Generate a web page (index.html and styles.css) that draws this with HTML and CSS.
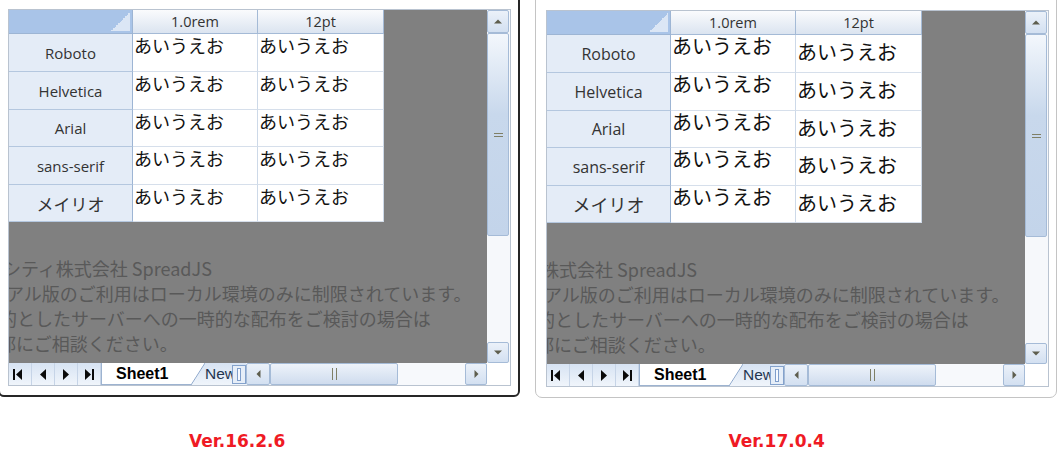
FILE: index.html
```html
<!DOCTYPE html>
<html lang="ja">
<head>
<meta charset="utf-8">
<title>SpreadJS font comparison</title>
<link rel="stylesheet" href="styles.css">
</head>
<body>
<div class="page">
  <div class="panels">
    <div class="panel panel-a">
      <div class="sheet">
        <div class="viewport">
          <div class="grid">
            <div class="corner"></div>
            <div class="colhdr">1.0rem</div>
            <div class="colhdr">12pt</div>
            <div class="rowhdr">Roboto</div><div class="cell c1">あいうえお</div><div class="cell c2">あいうえお</div>
            <div class="rowhdr">Helvetica</div><div class="cell c1">あいうえお</div><div class="cell c2">あいうえお</div>
            <div class="rowhdr">Arial</div><div class="cell c1">あいうえお</div><div class="cell c2">あいうえお</div>
            <div class="rowhdr">sans-serif</div><div class="cell c1">あいうえお</div><div class="cell c2">あいうえお</div>
            <div class="rowhdr rowhdr-jp">メイリオ</div><div class="cell c1">あいうえお</div><div class="cell c2">あいうえお</div>
          </div>
          <div class="watermark">
            <div class="wm wm1">グレープシティ株式会社 SpreadJS</div>
            <div class="wm wm2">トライアル版のご利用はローカル環境のみに制限されています。</div>
            <div class="wm wm3">評価を目的としたサーバーへの一時的な配布をご検討の場合は</div>
            <div class="wm wm4">営業部にご相談ください。</div>
          </div>
        </div>
        <div class="vscroll">
          <div class="sbtn vbtn-up"><svg width="8" height="5" viewBox="0 0 8 5"><path d="M0 4.5L4 .5L8 4.5Z"/></svg></div>
          <div class="vthumb"><span class="vgrip"></span></div>
          <div class="vtrack"></div>
          <div class="sbtn vbtn-down"><svg width="8" height="5" viewBox="0 0 8 5"><path d="M0 .5L4 4.5L8 .5Z"/></svg></div>
        </div>
        <div class="tabbar">
          <div class="nav">
            <div class="navbtn nb1"><svg width="9" height="11" viewBox="0 0 9 11"><rect x="0" y="0" width="2" height="11"/><path d="M9 0L3 5.5L9 11Z"/></svg></div>
            <div class="navbtn"><svg width="6" height="11" viewBox="0 0 6 11"><path d="M6 0L0 5.5L6 11Z"/></svg></div>
            <div class="navbtn"><svg width="6" height="11" viewBox="0 0 6 11"><path d="M0 0L6 5.5L0 11Z"/></svg></div>
            <div class="navbtn"><svg width="9" height="11" viewBox="0 0 9 11"><path d="M0 0L6 5.5L0 11Z"/><rect x="7" y="0" width="2" height="11"/></svg></div>
          </div>
          <div class="tab-active">Sheet1</div>
          <div class="tab-new">New</div>
          <div class="splitter"><span></span></div>
          <div class="hscroll">
            <div class="sbtn hbtn-l"><svg width="5" height="8" viewBox="0 0 5 8"><path d="M4.5 0L.5 4L4.5 8Z"/></svg></div>
            <div class="hthumb"><span class="hgrip"></span></div>
            <div class="htrack"></div>
            <div class="sbtn hbtn-r"><svg width="5" height="8" viewBox="0 0 5 8"><path d="M.5 0L4.5 4L.5 8Z"/></svg></div>
          </div>
        </div>
        <div class="sheet-corner"></div>
      </div>
    </div>

    <div class="panel panel-b">
      <div class="sheet sheet-17">
        <div class="viewport">
          <div class="grid">
            <div class="corner"></div>
            <div class="colhdr">1.0rem</div>
            <div class="colhdr">12pt</div>
            <div class="rowhdr">Roboto</div><div class="cell c1">あいうえお</div><div class="cell c2">あいうえお</div>
            <div class="rowhdr">Helvetica</div><div class="cell c1">あいうえお</div><div class="cell c2">あいうえお</div>
            <div class="rowhdr">Arial</div><div class="cell c1">あいうえお</div><div class="cell c2">あいうえお</div>
            <div class="rowhdr">sans-serif</div><div class="cell c1">あいうえお</div><div class="cell c2">あいうえお</div>
            <div class="rowhdr rowhdr-jp">メイリオ</div><div class="cell c1">あいうえお</div><div class="cell c2">あいうえお</div>
          </div>
          <div class="watermark">
            <div class="wm wm1b">メシウス株式会社 SpreadJS</div>
            <div class="wm wm2">トライアル版のご利用はローカル環境のみに制限されています。</div>
            <div class="wm wm3">評価を目的としたサーバーへの一時的な配布をご検討の場合は</div>
            <div class="wm wm4">営業部にご相談ください。</div>
          </div>
        </div>
        <div class="vscroll">
          <div class="sbtn vbtn-up"><svg width="8" height="5" viewBox="0 0 8 5"><path d="M0 4.5L4 .5L8 4.5Z"/></svg></div>
          <div class="vthumb"><span class="vgrip"></span></div>
          <div class="vtrack"></div>
          <div class="sbtn vbtn-down"><svg width="8" height="5" viewBox="0 0 8 5"><path d="M0 .5L4 4.5L8 .5Z"/></svg></div>
        </div>
        <div class="tabbar">
          <div class="nav">
            <div class="navbtn nb1"><svg width="9" height="11" viewBox="0 0 9 11"><rect x="0" y="0" width="2" height="11"/><path d="M9 0L3 5.5L9 11Z"/></svg></div>
            <div class="navbtn"><svg width="6" height="11" viewBox="0 0 6 11"><path d="M6 0L0 5.5L6 11Z"/></svg></div>
            <div class="navbtn"><svg width="6" height="11" viewBox="0 0 6 11"><path d="M0 0L6 5.5L0 11Z"/></svg></div>
            <div class="navbtn"><svg width="9" height="11" viewBox="0 0 9 11"><path d="M0 0L6 5.5L0 11Z"/><rect x="7" y="0" width="2" height="11"/></svg></div>
          </div>
          <div class="tab-active">Sheet1</div>
          <div class="tab-new">New</div>
          <div class="splitter"><span></span></div>
          <div class="hscroll">
            <div class="sbtn hbtn-l"><svg width="5" height="8" viewBox="0 0 5 8"><path d="M4.5 0L.5 4L4.5 8Z"/></svg></div>
            <div class="hthumb"><span class="hgrip"></span></div>
            <div class="htrack"></div>
            <div class="sbtn hbtn-r"><svg width="5" height="8" viewBox="0 0 5 8"><path d="M.5 0L4.5 4L.5 8Z"/></svg></div>
          </div>
        </div>
        <div class="sheet-corner"></div>
      </div>
    </div>
  </div>

  <div class="labels">
    <div class="ver ver-a">Ver.16.2.6</div>
    <div class="ver ver-b">Ver.17.0.4</div>
  </div>
</div>
</body>
</html>
```
FILE: styles.css
```css
* { box-sizing: border-box; }

body {
  margin: 0;
  background: #fff;
  font-family: "Open Sans", "Noto Sans CJK JP", sans-serif;
}

.page {
  width: 1059px;
  height: 466px;
  overflow: hidden;
}

.panels {
  display: flex;
  align-items: flex-start;
}

.panel { background: #fff; }

.panel-a {
  margin: -2px 0 0 -2px;
  width: 522px;
  height: 399px;
  border: 2px solid #262626;
  border-radius: 0 0 6px 6px;
  padding: 9px 0 0 8px;
}

.panel-b {
  margin: -1px 0 0 15px;
  width: 522px;
  height: 399px;
  border: 1px solid #c4c4c4;
  border-radius: 0 0 7px 7px;
  padding: 10px 0 0 10px;
}

/* ---------- spreadsheet ---------- */
.sheet {
  width: 503px;
  height: 377px;
  border: 1px solid #b9c3d0;
  display: grid;
  grid-template-columns: 478px 23px;
  grid-template-rows: 353px 22px;
  background: #fff;
}

.viewport {
  background: #808080;
  position: relative;
  overflow: hidden;
}

.grid {
  display: grid;
  grid-template-columns: 124px 125px 126px;
  grid-template-rows: 24px 38px 38px 37px 38px 37px;
  width: 375px;
}

.corner {
  background:
    linear-gradient(135deg, transparent 50%, #dbe6f5 50%) right 2px bottom 2px / 19px 19px no-repeat,
    #a9c4e8;
  border-right: 1px solid #9db5d4;
  border-bottom: 1px solid #9db5d4;
}

.colhdr {
  background: linear-gradient(#fafbfd, #dbe4f0);
  border-right: 1px solid #a4bad6;
  border-bottom: 1px solid #a4bad6;
  display: flex;
  align-items: center;
  justify-content: center;
  font-size: 14.5px;
  color: #333;
}

.rowhdr {
  background: #e4ecf7;
  border-right: 1px solid #9db5d4;
  border-bottom: 1px solid #b4c7df;
  display: flex;
  align-items: center;
  justify-content: center;
  font-size: 15px;
  color: #333;
}

.rowhdr-jp {
  font-family: "Noto Sans CJK JP", sans-serif;
  font-size: 17px;
}

.cell {
  background: #fff;
  border-right: 1px solid #cdd9e8;
  border-bottom: 1px solid #d6dfeb;
  font-family: "Noto Sans CJK JP", sans-serif;
  font-size: 18px;
  line-height: 22px;
  padding: 0 0 0 1px;
  color: #111;
  white-space: nowrap;
}

.sheet-17 .rowhdr { font-size: 16px; }
.sheet-17 .rowhdr-jp { font-size: 18px; }
.sheet-17 .cell { font-size: 20px; line-height: 22px; }
.sheet-17 .c1 { padding-top: 0; }
.sheet-17 .c2 { padding-top: 6px; }

/* watermark overlay */
.watermark {
  position: absolute;
  left: 0;
  top: 246px;
  font-family: "Noto Sans CJK JP", sans-serif;
  font-size: 18px;
  line-height: 25px;
  color: #595959;
  white-space: nowrap;
}
.wm1 { margin-left: -77px; }
.wm1b { margin-left: -78px; }
.wm2 { margin-left: -57px; }
.wm3 { margin-left: -82px; }
.wm4 { margin-left: -47px; }

/* ---------- scrollbars ---------- */
.vscroll {
  display: flex;
  flex-direction: column;
  background: #f6f8fb;
  padding-right: 1px;
}

.sbtn {
  display: flex;
  align-items: center;
  justify-content: center;
  background: linear-gradient(#ebf1f9, #d3e0f1);
  border: 1px solid #a5bbd7;
  border-radius: 2px;
  fill: #5e5e4e;
}

.vbtn-up { height: 23px; }
.vbtn-down { height: 21px; }

.vthumb {
  height: 203px;
  background: linear-gradient(#f3f7fc, #c8d8ec 40%, #c3d4ea);
  border: 1px solid #a5bbd7;
  border-radius: 2px;
  display: flex;
  align-items: center;
  justify-content: center;
}

.vgrip {
  width: 9px;
  height: 4px;
  border-top: 1px solid #7f7f66;
  border-bottom: 1px solid #7f7f66;
}

.vtrack { height: 106px; }

/* ---------- tab bar ---------- */
.tabbar {
  display: flex;
  background: linear-gradient(#d7e3f3, #f0f5fb);
}

.nav { display: flex; }

.navbtn {
  width: 23px;
  display: flex;
  align-items: center;
  justify-content: center;
  border-right: 1px solid #c6d4e7;
  fill: #0a0a0a;
}

.nb1 { padding-right: 6px; }

.tab-active {
  width: 104px;
  display: flex;
  align-items: center;
  padding: 0 0 1px 14px;
  font-family: "Liberation Sans", Arial, sans-serif;
  font-weight: bold;
  font-size: 16px;
  color: #000;
  border-left: 1px solid #9db3d0;
  background:
    linear-gradient(#9db3d0, #9db3d0) left bottom / calc(100% - 14px) 1px no-repeat,
    linear-gradient(to bottom right, #fff calc(50% - 0.8px), #8ea8cc 50%, transparent calc(50% + 0.8px)) right top / 14px 100% no-repeat,
    linear-gradient(#fff, #fff) left top / calc(100% - 14px) 100% no-repeat;
}

.tab-new {
  width: 27px;
  overflow: hidden;
  display: flex;
  align-items: center;
  font-family: "Liberation Sans", Arial, sans-serif;
  font-size: 15.5px;
  color: #243650;
  white-space: nowrap;
}

.splitter {
  width: 14px;
  margin: 2px 0 1px;
  border: 1px solid #84a2cc;
  background: #e6eef8;
  display: flex;
  align-items: center;
  justify-content: center;
}

.splitter span {
  width: 4px;
  height: 13px;
  border: 1px solid #7f9ecb;
  background: #f7faff;
}

.hscroll {
  display: flex;
  width: 241px;
  background: #f7f9fc;
}

.hbtn-l { width: 24px; }
.hbtn-r { width: 22px; }

.hthumb {
  width: 128px;
  background: linear-gradient(#eef3fa, #cfdcee);
  border: 1px solid #a5bbd7;
  border-radius: 2px;
  display: flex;
  align-items: center;
  justify-content: center;
}

.hgrip {
  width: 5px;
  height: 12px;
  border-left: 1px solid #7f7f66;
  border-right: 1px solid #7f7f66;
}

.htrack { flex: 1; }

.sheet-corner { background: #fff; }

/* ---------- version labels ---------- */
.labels {
  display: flex;
  margin-top: 33px;
}

.ver {
  font-family: "DejaVu Sans", sans-serif;
  font-weight: bold;
  font-size: 17px;
  color: #ef1a24;
}

.ver-a { margin-left: 189px; }
.ver-b { margin-left: 443px; }
```
